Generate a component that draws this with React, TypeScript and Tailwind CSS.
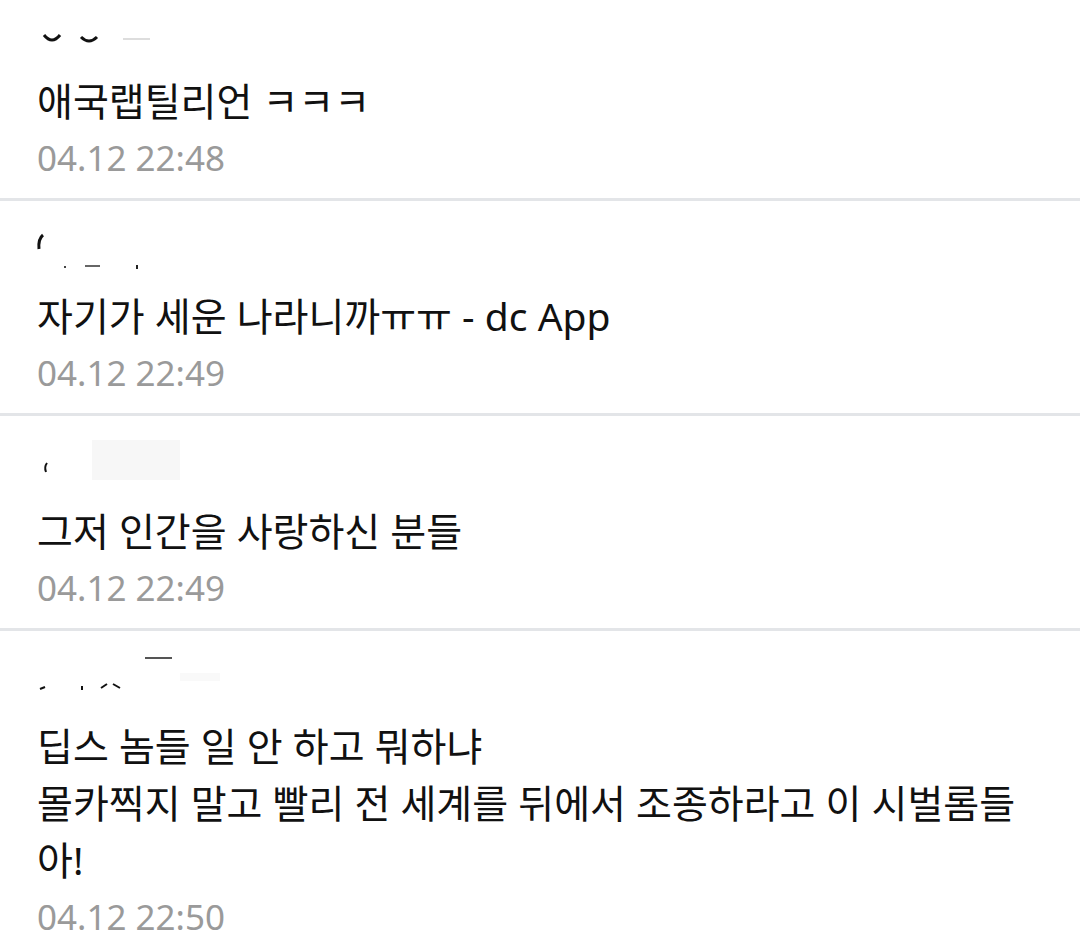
import React from 'react'

interface Comment {
  id: number
  lines: string[]
  date: string
  mark: React.ReactNode
}

// leftovers of the blurred nicknames, drawn roughly
const marks: React.ReactNode[] = [
  <>
    <path d="M44 27 Q52 37 60 27" stroke="#111" strokeWidth="3" fill="none" />
    <path d="M81 29 Q89 37 97 29" stroke="#111" strokeWidth="3" fill="none" />
    <line x1="123" y1="31" x2="150" y2="31" stroke="#ddd" strokeWidth="2" />
  </>,
  <>
    <path d="M43 12 Q38 16 39 26" stroke="#111" strokeWidth="3" fill="none" />
    <line x1="64" y1="44" x2="66" y2="44" stroke="#444" strokeWidth="2" />
    <line x1="85" y1="43" x2="100" y2="43" stroke="#666" strokeWidth="2" />
    <line x1="137" y1="42" x2="137" y2="46" stroke="#222" strokeWidth="2" />
  </>,
  <>
    <path d="M47 25 Q44 29 46 34" stroke="#111" strokeWidth="2" fill="none" />
    <rect x="92" y="2" width="88" height="40" fill="#f7f7f7" />
  </>,
  <>
    <line x1="145" y1="5" x2="172" y2="5" stroke="#555" strokeWidth="2" />
    <rect x="180" y="20" width="40" height="8" fill="#f9f9f9" />
    <line x1="40" y1="36" x2="45" y2="34" stroke="#111" strokeWidth="2" />
    <line x1="82" y1="33" x2="82" y2="37" stroke="#111" strokeWidth="2" />
    <path d="M101 35 L107 31 M113 31 L120 35" stroke="#111" strokeWidth="2" fill="none" />
  </>,
]

const comments: Comment[] = [
  { id: 1, lines: ['애국랩틸리언 ㅋㅋㅋ'], date: '04.12 22:48', mark: marks[0] },
  { id: 2, lines: ['자기가 세운 나라니까ㅠㅠ - dc App'], date: '04.12 22:49', mark: marks[1] },
  { id: 3, lines: ['그저 인간을 사랑하신 분들'], date: '04.12 22:49', mark: marks[2] },
  {
    id: 4,
    lines: ['딥스 놈들 일 안 하고 뭐하냐', '몰카찍지 말고 빨리 전 세계를 뒤에서 조종하라고 이 시벌롬들', '아!'],
    date: '04.12 22:50',
    mark: marks[3],
  },
]

const CommentRow: React.FC<{ c: Comment; last: boolean }> = ({ c, last }) => (
  <div className={last ? 'pt-[22px] pb-3' : 'pt-[22px] pb-3 border-b-[3px] border-[#e3e5e8]'}>
    <div className="h-[64px]">
      <svg width="260" height="64" viewBox="0 0 260 64">
        {c.mark}
      </svg>
    </div>
    <div className="px-[37px] text-[39px] leading-[57px] text-[#111]">
      {c.lines.map((l, i) => (
        <div key={i}>{l}</div>
      ))}
    </div>
    <div className="px-[37px] text-[35px] leading-[57px] text-[#9a9a9a]">{c.date}</div>
  </div>
)

export default function App() {
  return (
    <div
      className="w-[1080px] h-[944px] overflow-hidden bg-white"
      style={{ fontFamily: '"Noto Sans", "Noto Sans CJK KR", sans-serif' }}
    >
      <div className="-mt-[14px]">
        {comments.map((c, i) => (
          <CommentRow key={c.id} c={c} last={i === comments.length - 1} />
        ))}
      </div>
    </div>
  )
}
